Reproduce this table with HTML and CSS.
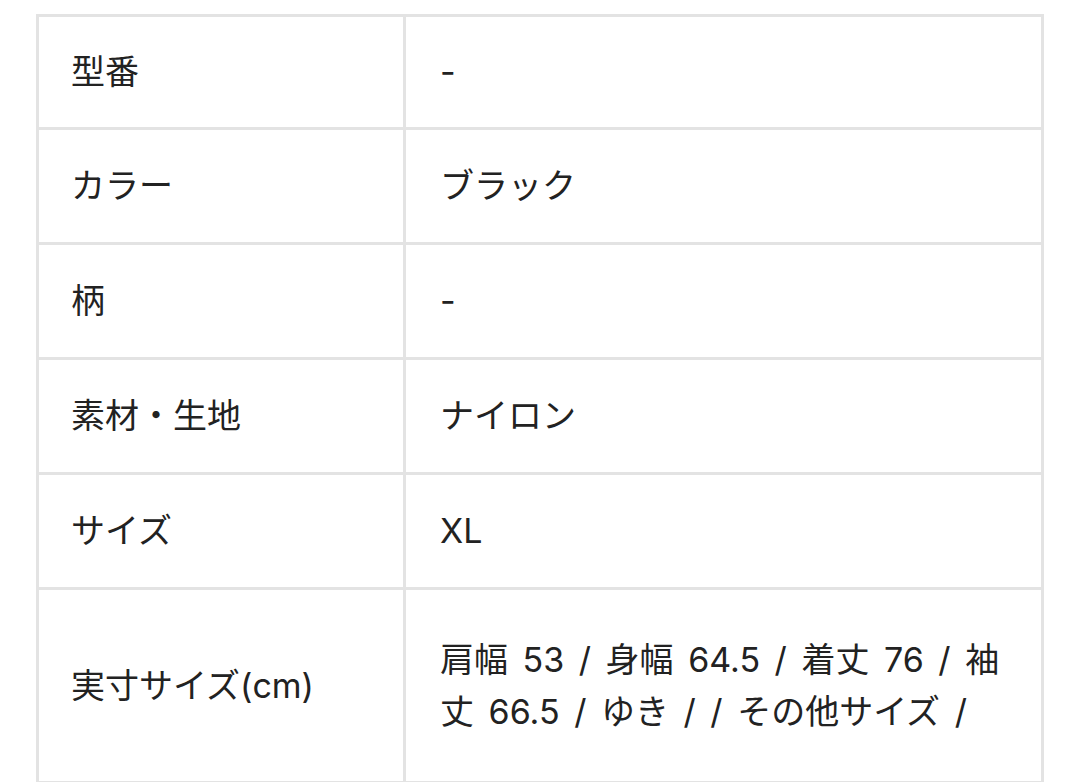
FILE: index.html
```html
<!DOCTYPE html>
<html lang="ja">
<head>
<meta charset="utf-8">
<link rel="stylesheet" href="styles.css">
</head>
<body>
<div class="spec">
  <div class="row first"><div class="label">型番</div><div class="value">-</div></div>
  <div class="row"><div class="label">カラー</div><div class="value">ブラック</div></div>
  <div class="row"><div class="label">柄</div><div class="value">-</div></div>
  <div class="row"><div class="label">素材・生地</div><div class="value">ナイロン</div></div>
  <div class="row"><div class="label">サイズ</div><div class="value">XL</div></div>
  <div class="row last"><div class="label">実寸サイズ(cm)</div><div class="value">肩幅 53 / 身幅 64.5 / 着丈 76 / 袖丈 66.5 / ゆき / / その他サイズ /</div></div>
</div>
</body>
</html>
```
FILE: styles.css
```css
html, body {
  margin: 0;
  padding: 0;
  background: #ffffff;
}
body {
  font-family: Inter, "Noto Sans CJK JP", sans-serif;
  color: #222222;
  font-size: 34px;
}
.spec {
  margin: 14px 0 0 36px;
  width: 1008px;
  border: 3px solid #e3e3e3;
  border-bottom: none;
  box-sizing: border-box;
}
.row {
  display: grid;
  grid-template-columns: 367px 1fr;
  height: 115px;
  border-bottom: 3px solid #e3e3e3;
  box-sizing: border-box;
}
.row.first {
  height: 113px;
}
.row.last {
  height: 194px;
}
.label, .value {
  display: flex;
  align-items: center;
  line-height: 52px;
}
.label {
  padding-left: 32px;
  border-right: 3px solid #e3e3e3;
}
.value {
  padding: 0 24px 0 34px;
  word-spacing: 5px;
}
```
